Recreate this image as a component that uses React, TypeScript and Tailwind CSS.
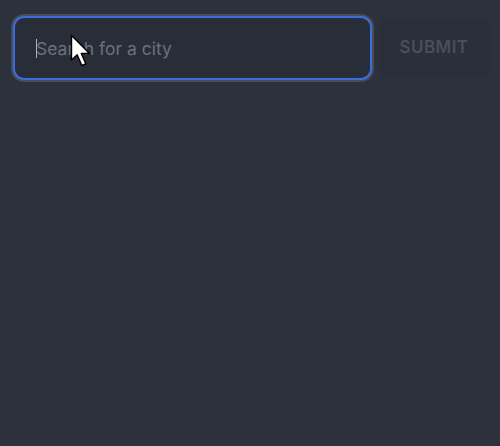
import React from 'react';

const Cursor = () => (
  <svg className="absolute left-[70px] top-[34px] pointer-events-none" width="24" height="36" viewBox="0 0 24 36">
    <path d="M1.5 1.5 L1.5 26 L7.2 20.8 L11.8 31.5 L15.8 29.8 L11.3 19.5 L19.5 19.5 Z" fill="#fff" stroke="#000" strokeWidth="1.4" strokeLinejoin="round" />
  </svg>
);

const App = () => {
  return (
    <div className="w-[500px] h-[446px] bg-[#2c313c] relative" style={{ fontFamily: 'Inter, "Noto Sans", sans-serif' }}>
      <div className="flex items-center gap-[6px] pl-[13px] pr-[10px] pt-[16px]">
        <div className="relative flex-1">
          <input
            className="w-full h-[64px] rounded-[11px] border-[2.5px] border-[#3a6de0] bg-[#292d37] pl-[21px] text-[17.5px] text-[#c7cbd4] placeholder-[#6b717e] outline-none shadow-[0_0_0_2px_#474c57]"
            placeholder="Search for a city"
          />
          <span className="absolute left-[23px] top-[23px] w-px h-[19px] bg-[#aeb3bd]" />
        </div>
        <button className="w-[112px] h-[60px] rounded-[9px] bg-[#2a2f39] text-[17px] font-semibold tracking-[0.4px] text-[#494e59]">
          SUBMIT
        </button>
      </div>
      <Cursor />
    </div>
  );
};

export default App;
